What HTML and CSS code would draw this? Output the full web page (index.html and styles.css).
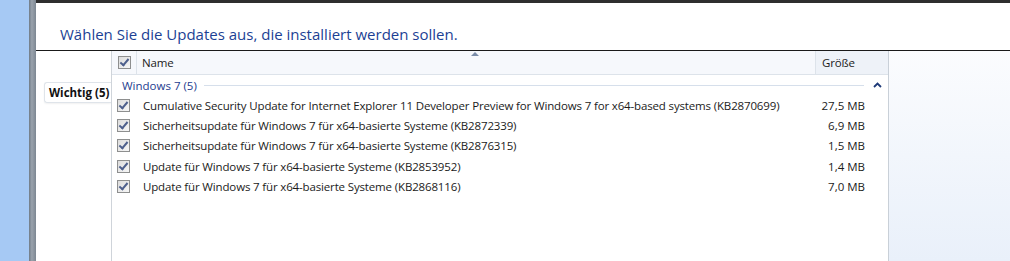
FILE: index.html
```html
<html>
  <head>
    <link rel="stylesheet" href="styles.css">
  </head>
  <body class="body">
    <div class="Window">
      <div class="Window-desk"></div>
      <div class="Window-frame"></div>
      <div class="Window-main">
        <div class="Title">
          <h1 class="Title-text">Wählen Sie die Updates aus, die installiert werden sollen.</h1>
        </div>
        <div class="Content">
          <div class="Nav">
            <div class="Nav-tab">Wichtig (5)</div>
          </div>

          <div class="List">
            <div class="List-head">
              <div class="List-headCheck"><span class="Check"></span></div>
              <div class="List-headName">
                Name
                <span class="List-sort"></span>
              </div>
              <div class="List-headSize">Größe</div>
            </div>

            <div class="Group">
              <span class="Group-title">Windows 7 (5)</span>
              <span class="Group-line"></span>
              <span class="Group-toggle">
                <svg width="9" height="6" viewBox="0 0 9 6"><path d="M1 5 L4.5 1.5 L8 5" fill="none" stroke="#1e3a78" stroke-width="1.8"/></svg>
              </span>
            </div>

            <div class="Row">
              <span class="Row-check"><span class="Check"></span></span>
              <span class="Row-name">Cumulative Security Update for Internet Explorer 11 Developer Preview for Windows 7 for x64-based systems (KB2870699)</span>
              <span class="Row-size">27,5 MB</span>
            </div>
            <div class="Row">
              <span class="Row-check"><span class="Check"></span></span>
              <span class="Row-name">Sicherheitsupdate für Windows 7 für x64-basierte Systeme (KB2872339)</span>
              <span class="Row-size">6,9 MB</span>
            </div>
            <div class="Row">
              <span class="Row-check"><span class="Check"></span></span>
              <span class="Row-name">Sicherheitsupdate für Windows 7 für x64-basierte Systeme (KB2876315)</span>
              <span class="Row-size">1,5 MB</span>
            </div>
            <div class="Row">
              <span class="Row-check"><span class="Check"></span></span>
              <span class="Row-name">Update für Windows 7 für x64-basierte Systeme (KB2853952)</span>
              <span class="Row-size">1,4 MB</span>
            </div>
            <div class="Row">
              <span class="Row-check"><span class="Check"></span></span>
              <span class="Row-name">Update für Windows 7 für x64-basierte Systeme (KB2868116)</span>
              <span class="Row-size">7,0 MB</span>
            </div>
          </div>

          <div class="Side"></div>
        </div>
      </div>
    </div>
  </body>
</html>
```

FILE: styles.css
```css
html, body {
  padding: 0;
  margin: 0;
  font-family: "Open Sans", "Noto Sans", Arial, sans-serif;
  font-size: 11.5px;
  letter-spacing: -0.15px;
  color: #1b1b1b;
}
.body {
  width: 1010px;
  height: 261px;
  overflow: hidden;
}

.Window {
  display: flex;
  height: 261px;
}
.Window-desk {
  width: 29px;
  background: #a6c9f4;
}
.Window-frame {
  width: 7px;
  background: linear-gradient(to right, #6f7a86, #9aa3ad 40%, #7d8792);
}
.Window-main {
  flex: 1;
  display: flex;
  flex-direction: column;
  background: #fff;
  border-top: 3px solid #2f2f2f;
}

.Title {
  height: 47px;
  border-bottom: 1px solid #1a1a1a;
  display: flex;
  align-items: flex-end;
  padding-left: 24px;
}
.Title-text {
  margin: 0 0 6px;
  font-size: 15px;
  letter-spacing: 0;
  font-weight: normal;
  color: #1c3f94;
}

.Content {
  flex: 1;
  display: flex;
}

.Nav {
  width: 75px;
  padding-top: 31px;
}
.Nav-tab {
  margin-left: 8px;
  height: 19px;
  line-height: 19px;
  padding-left: 4px;
  border: 1px solid #dfe4ea;
  border-right: none;
  border-radius: 3px 0 0 3px;
  font-weight: bold;
  font-size: 11.5px;
  letter-spacing: 0;
  color: #111;
  box-shadow: 0 1px 2px rgba(0, 0, 0, 0.06);
}

.List {
  width: 776px;
  border-left: 1px solid #cfd4da;
  border-right: 1px solid #c9d0d8;
  background: #fff;
}
.List-head {
  display: flex;
  height: 23px;
  background: #f6f8fc;
  border-bottom: 1px solid #dde3ea;
}
.List-headCheck {
  width: 25px;
  display: flex;
  align-items: center;
  padding-left: 6px;
  box-sizing: border-box;
  border-right: 1px solid #dde3ea;
}
.List-headName {
  position: relative;
  width: 679px;
  padding-left: 5px;
  line-height: 23px;
  border-right: 1px solid #dde3ea;
  box-sizing: border-box;
}
.List-sort {
  position: absolute;
  left: 334px;
  top: 1px;
  width: 0;
  height: 0;
  border-left: 4px solid transparent;
  border-right: 4px solid transparent;
  border-bottom: 4px solid #7a8ca8;
}
.List-headSize {
  flex: 1;
  padding-left: 6px;
  line-height: 23px;
  background: #eef2f8;
}

.Check {
  display: inline-block;
  width: 11px;
  height: 11px;
  border: 1px solid #8e8f8f;
  background: linear-gradient(135deg, #dcdcdc, #f7f7f7);
  position: relative;
}
.Check::after {
  content: "";
  position: absolute;
  left: 3px;
  top: 0px;
  width: 3px;
  height: 7px;
  border: solid #4d5f8c;
  border-width: 0 2px 2px 0;
  transform: rotate(40deg);
}

.Group {
  display: flex;
  align-items: center;
  height: 20px;
  padding-left: 10px;
}
.Group-title {
  color: #1e3d8f;
  letter-spacing: 0;
}
.Group-line {
  flex: 1;
  height: 1px;
  background: #d6dfeb;
  margin: 0 0 0 7px;
}
.Group-toggle {
  width: 24px;
  box-sizing: border-box;
  display: flex;
  padding-left: 9px;
}

.Row {
  display: flex;
  align-items: center;
  height: 20.3px;
}
.Row-check {
  width: 31px;
  padding-left: 5px;
  box-sizing: border-box;
  display: flex;
}
.Row-name {
  width: 673px;
  white-space: nowrap;
}
.Row-size {
  width: 49px;
  text-align: right;
  letter-spacing: 0;
}

.Side {
  flex: 1;
  background: linear-gradient(to bottom, #fbfcfe, #e9f0fa);
}
```
